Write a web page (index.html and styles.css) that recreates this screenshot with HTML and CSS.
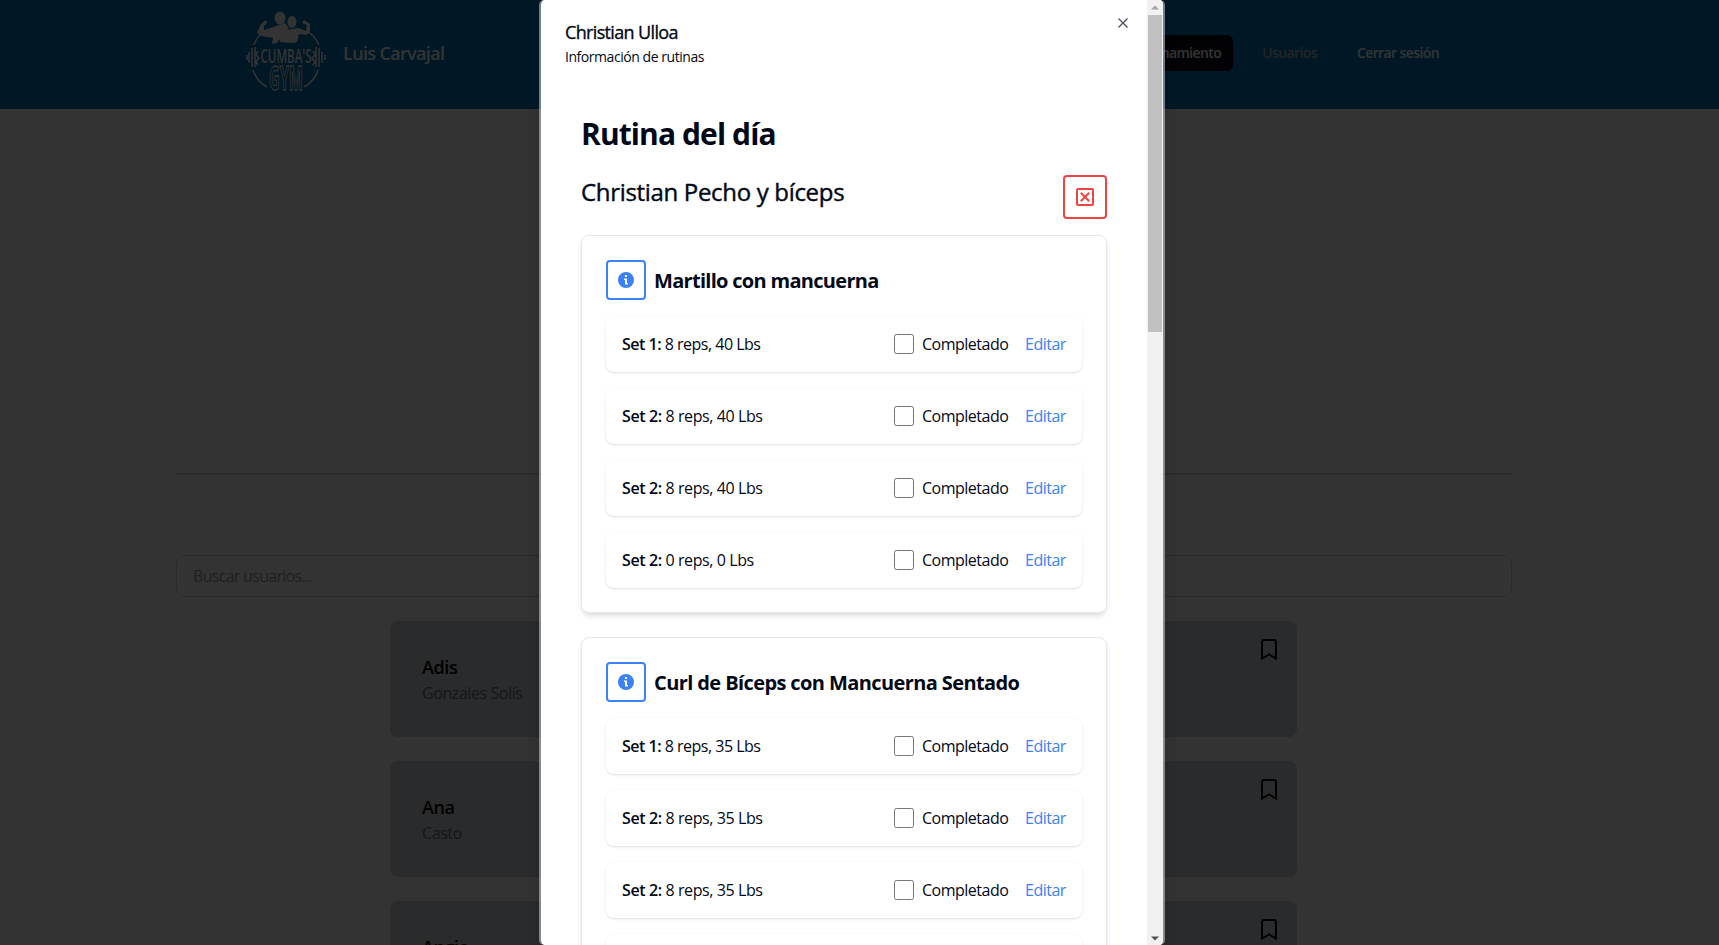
FILE: index.html
```html
<!DOCTYPE html>
<html lang="es">
<head>
<meta charset="utf-8">
<title>Cumba's Gym</title>
<link rel="stylesheet" href="styles.css">
</head>
<body>
<div class="page">
  <header class="topbar">
    <svg class="logo" width="82" height="86" viewBox="0 0 82 86">
      <g fill="none" stroke="#fff" stroke-width="1.5">
        <path d="M9 35Q11 28 17 23M74 35Q71 28 65 23M8 60Q12 72 22 77M73 60Q70 71 59 77"/>
        <path d="M4 42v11M2 45v5M7 38v19M10 37v20M13 41l-2 4 3 3-3 4 2 3M77 42v11M80 45v5M74 38v19M71 37v20M68 41l2 4-3 3 3 4-2 3"/>
      </g>
      <g fill="#fff">
        <ellipse cx="35" cy="8" rx="5.500" ry="6.500"/>
        <ellipse cx="47" cy="12" rx="4.500" ry="6"/>
        <path d="M16 14l5-4 1 3-3 3v4l9-3 12-4 4 5-8 9-4 6-5 1 1-6-12-2-4-3zM41 20l12-2 8 3 1-6-5-2 2-3 6 4v9l-4 2-7-1-2 8-4 1-13-1-1-6 3-7z"/>
      </g>
      <text x="41" y="53" class="logo-name" textLength="51" lengthAdjust="spacingAndGlyphs">CUMBA'S</text>
      <text x="41" y="80" class="logo-gym" textLength="34" lengthAdjust="spacingAndGlyphs">GYM</text>
    </svg>
    <span class="owner">Luis Carvajal</span>
    <nav class="nav">
      <a class="nav-item active">Entrenamiento</a>
      <a class="nav-item muted">Usuarios</a>
      <a class="nav-item">Cerrar sesión</a>
    </nav>
  </header>
  <main class="main">
    <hr class="rule">
    <div class="search">Buscar usuarios...</div>
    <div class="users">
      <article class="user"><div><h3>Adis</h3><p>Gonzales Solís</p></div><svg width="16" height="21" viewBox="0 0 16 21"><path d="M1 19.500V3Q1 1 3 1h10q2 0 2 2v16.500l-7-4z"/></svg></article>
      <article class="user"><div><h3>Ana</h3><p>Casto</p></div><svg width="16" height="21" viewBox="0 0 16 21"><path d="M1 19.500V3Q1 1 3 1h10q2 0 2 2v16.500l-7-4z"/></svg></article>
      <article class="user"><div><h3>Angie</h3></div><svg width="16" height="21" viewBox="0 0 16 21"><path d="M1 19.500V3Q1 1 3 1h10q2 0 2 2v16.500l-7-4z"/></svg></article>
    </div>
  </main>
</div>
<div class="overlay">
  <section class="dialog">
    <div class="content">
      <h2 class="name">Christian Ulloa</h2>
      <p class="desc">Información de rutinas</p>
      <svg class="close" width="12" height="12" viewBox="0 0 12 12"><path d="M1.500 1.500l9 9M10.500 1.500l-9 9"/></svg>
      <div class="body">
        <h1 class="heading">Rutina del día</h1>
        <div class="routine">
          <h2>Christian Pecho y bíceps</h2>
          <button class="remove"><svg width="18" height="18" viewBox="0 0 18 18"><rect x="1" y="1" width="16" height="16" rx="1"/><path d="M4.800 4.800l8.400 8.400M13.200 4.800l-8.400 8.400"/></svg></button>
        </div>
        <div class="exercise">
          <div class="ex-head"><span class="info"><svg width="16" height="16" viewBox="0 0 16 16"><circle cx="8" cy="8" r="8"/><path d="M7 3h2v2H7zM6 6.500h3V11h1v1.500H7V8H6z"/></svg></span><h3>Martillo con mancuerna</h3></div>
          <div class="set"><p><b>Set 1:</b> 8 reps, 40 Lbs</p><i class="box"></i><span class="done">Completado</span><a class="edit">Editar</a></div>
          <div class="set"><p><b>Set 2:</b> 8 reps, 40 Lbs</p><i class="box"></i><span class="done">Completado</span><a class="edit">Editar</a></div>
          <div class="set"><p><b>Set 2:</b> 8 reps, 40 Lbs</p><i class="box"></i><span class="done">Completado</span><a class="edit">Editar</a></div>
          <div class="set"><p><b>Set 2:</b> 0 reps, 0 Lbs</p><i class="box"></i><span class="done">Completado</span><a class="edit">Editar</a></div>
        </div>
        <div class="exercise">
          <div class="ex-head"><span class="info"><svg width="16" height="16" viewBox="0 0 16 16"><circle cx="8" cy="8" r="8"/><path d="M7 3h2v2H7zM6 6.500h3V11h1v1.500H7V8H6z"/></svg></span><h3 class="long">Curl de Bíceps con Mancuerna Sentado</h3></div>
          <div class="set"><p><b>Set 1:</b> 8 reps, 35 Lbs</p><i class="box"></i><span class="done">Completado</span><a class="edit">Editar</a></div>
          <div class="set"><p><b>Set 2:</b> 8 reps, 35 Lbs</p><i class="box"></i><span class="done">Completado</span><a class="edit">Editar</a></div>
          <div class="set"><p><b>Set 2:</b> 8 reps, 35 Lbs</p><i class="box"></i><span class="done">Completado</span><a class="edit">Editar</a></div>
          <div class="set"></div>
        </div>
      </div>
    </div>
    <div class="scrollbar">
      <svg width="16" height="15" viewBox="0 0 16 15"><path fill="#a3a3a3" d="M4 9.500l4-4 4 4z"/></svg>
      <div class="thumb"></div>
      <svg class="down" width="16" height="15" viewBox="0 0 16 15"><path fill="#505050" d="M4 6.500h8l-4 4z"/></svg>
    </div>
  </section>
</div>
</body>
</html>
```
FILE: styles.css
```css
* { box-sizing: border-box; margin: 0; padding: 0; }
body { font-family: "Open Sans", "Noto Sans", sans-serif; font-size: 16px; line-height: 24px; color: #020817; height: 945px; overflow: hidden; background: #fff; }
h1, h2, h3, p, span, a { white-space: nowrap; }
.page { height: 945px; overflow: hidden; }
.topbar { height: 109px; background: #0077bd; display: flex; align-items: center; padding: 0 268px 3px 245px; color: #fff; }
.logo-name { font: 600 20px "Open Sans", sans-serif; fill: #fff; text-anchor: middle; }
.logo-gym { font: 700 34px "Open Sans", sans-serif; fill: none; stroke: #fff; stroke-width: 1.300px; text-anchor: middle; }
.owner { margin-left: 16px; font-size: 18px; font-weight: 600; letter-spacing: -0.650px; }
.nav { display: flex; margin-left: auto; gap: 16px; align-items: center; }
.nav-item { font-size: 14px; font-weight: 600; height: 36px; line-height: 36px; padding: 0 12px; border-radius: 6px; letter-spacing: -0.600px; }
.nav-item.active { background: #0a0a14; margin-right: 1px; }
.nav-item.muted { color: #b4b4b4; }
.main { padding: 364px 207px 0 176px; }
.rule { border: 0; height: 2px; background: #d8d8da; }
.search { margin-top: 80px; height: 42px; border: 1px solid #d8d8da; border-radius: 8px; padding: 0 16px; line-height: 41px; color: #9ca3af; letter-spacing: -0.700px; }
.users { margin: 24px 215px 0 214px; display: flex; flex-direction: column; gap: 24px; }
.user { height: 116px; flex: none; background: #d1d5db; border-radius: 8px; padding: 32px 20px 0 32px; display: flex; justify-content: space-between; }
.user h3 { font-size: 18px; line-height: 28px; font-weight: 600; letter-spacing: -0.400px; color: #000; }
.user p { color: #6b7280; letter-spacing: -0.420px; }
.user svg { margin-top: -14px; fill: none; stroke: #000; stroke-width: 2; }
.overlay { position: absolute; inset: 0; background: rgba(0, 0, 0, 0.8); display: flex; padding-left: 539px; overflow: hidden; }
.dialog { width: 626px; height: 945px; border: solid rgba(226, 232, 240, 0.500); border-width: 0 2px; background: #fff; background-clip: padding-box; border-radius: 5px; display: flex; box-shadow: 0 6px 12px rgba(0, 0, 0, 0.150); overflow: hidden; }
.content { flex: 1; position: relative; padding: 18px 24px 0; }
.name { font-size: 18px; font-weight: 500; line-height: 28px; letter-spacing: -0.650px; -webkit-text-stroke: 0.350px #020817; }
.desc { font-size: 14px; line-height: 20px; margin-top: 1px; letter-spacing: -0.450px; }
.close { position: absolute; right: 18px; top: 17px; fill: none; stroke: #4a4f5a; stroke-width: 1.300; }
.body { padding: 49px 16px 0; }
.heading { font-size: 30px; line-height: 36px; font-weight: 700; letter-spacing: -0.900px; }
.routine { margin-top: 23px; display: flex; justify-content: space-between; height: 44px; }
.routine h2 { font-size: 24px; line-height: 33px; font-weight: 500; letter-spacing: -0.320px; -webkit-text-stroke: 0.400px #020817; }
.remove { width: 44px; height: 44px; border: 2px solid #ef4444; border-radius: 4px; background: #fff; display: flex; align-items: center; justify-content: center; }
.remove svg { fill: none; stroke: #ef4444; stroke-width: 2; }
.exercise { margin-top: 16px; border: 1px solid #e2e8f0; border-radius: 8px; padding: 24px; box-shadow: 0 4px 6px -1px rgba(0, 0, 0, 0.100), 0 2px 4px -2px rgba(0, 0, 0, 0.100); }
.exercise + .exercise { margin-top: 24px; }
.ex-head { display: flex; align-items: center; height: 40px; }
.ex-head h3 { margin-left: 8px; padding-top: 2px; font-size: 20px; line-height: 28px; font-weight: 700; letter-spacing: -0.700px; }
.ex-head .long { letter-spacing: -0.600px; }
.info { width: 40px; height: 40px; border: 2px solid #3b82f6; border-radius: 4px; display: flex; align-items: center; justify-content: center; fill: #3b82f6; }
.info path { fill: #fff; }
.set { margin-top: 16px; height: 56px; border-radius: 8px; padding: 0 16px; display: flex; align-items: center; box-shadow: 0 1px 3px rgba(0, 0, 0, 0.100), 0 1px 2px -1px rgba(0, 0, 0, 0.100); letter-spacing: -0.500px; }
.set p { flex: 1; }
.set + .set p { letter-spacing: -0.400px; }
.set b { font-weight: 600; }
.box { width: 20px; height: 20px; border: 1px solid #767676; border-radius: 2.500px; margin-right: 8px; }
.done { width: 87px; }
.edit { width: 41px; margin-left: 16px; color: #3b82f6; }
.scrollbar { width: 16px; background: #f1f1f1; display: flex; flex-direction: column; }
.thumb { height: 317px; margin: 0 1px; background: #c1c1c1; }
.down { margin-top: auto; }
```
